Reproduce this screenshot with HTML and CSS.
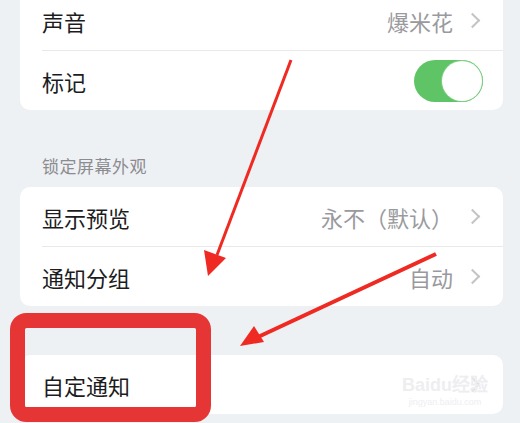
FILE: index.html
```html
<!DOCTYPE html>
<html lang="zh-CN">

<head>
    <meta charset="UTF-8">
    <meta name="viewport" content="width=device-width, initial-scale=1.0">
    <title>通知设置</title>
    <link rel="stylesheet" href="styles.css">
</head>

<body>
    <main class="settings">
        <!-- Sound / badge -->
        <section class="group group-top">
            <div class="row">
                <span class="label">声音</span>
                <span class="value">爆米花<i class="chevron"></i></span>
            </div>
            <div class="row">
                <span class="label">标记</span>
                <span class="toggle on"><span class="knob"></span></span>
            </div>
        </section>

        <!-- Lock screen -->
        <h3 class="group-title">锁定屏幕外观</h3>
        <section class="group">
            <div class="row">
                <span class="label">显示预览</span>
                <span class="value">永不（默认）<i class="chevron"></i></span>
            </div>
            <div class="row">
                <span class="label">通知分组</span>
                <span class="value">自动<i class="chevron"></i></span>
            </div>
        </section>

        <section class="group group-last">
            <div class="row">
                <span class="label">自定通知</span>
                <span class="value"><i class="chevron faint"></i></span>
            </div>
        </section>
    </main>

    <!-- Annotations -->
    <svg class="annotations" width="520" height="423" viewBox="0 0 520 423">
        <rect x="17.5" y="320.5" width="186" height="94" rx="9" fill="none" stroke="#e63535" stroke-width="15" />
        <line x1="291" y1="60" x2="217" y2="255" stroke="#ef2a22" stroke-width="3" />
        <polygon points="208,276 204,250 226,258" fill="#ef2a22" />
        <line x1="436" y1="254" x2="258" y2="337" stroke="#ef2a22" stroke-width="4" />
        <polygon points="240,346 254,326 264,342" fill="#ef2a22" />
    </svg>

    <div class="watermark">
        <div class="wm-brand">Bai<span class="wm-paw">du</span>经验</div>
        <div class="wm-url">jingyan.baidu.com</div>
    </div>
</body>

</html>
```

FILE: styles.css
```css
/* Base */
body {
    margin: 0;
    background-color: #eef1f4;
    font-family: "Noto Sans CJK SC", "Noto Sans", sans-serif;
    color: #1c1c1e;
    overflow: hidden;
}

.settings {
    padding: 0 17px 0 20px;
}

/* Groups */
.group {
    background-color: #ffffff;
    border-radius: 10px;
}

.group-top {
    margin-top: -9px;
    border-top-left-radius: 0;
    border-top-right-radius: 0;
}

.group-last {
    margin-top: 49px;
}

.group-title {
    margin: 0;
    padding: 44px 0 9px 22px;
    font-size: 17px;
    font-weight: 400;
    line-height: 24px;
    letter-spacing: 0.5px;
    color: #8c8c90;
}

/* Rows */
.row {
    display: flex;
    align-items: center;
    justify-content: space-between;
    height: 59px;
    margin-left: 22px;
    padding-right: 21px;
    box-sizing: border-box;
}

.row+.row {
    border-top: 1.5px solid #e9e9ec;
    height: 60px;
}

.label {
    font-size: 22px;
    line-height: 30px;
}

.value {
    display: flex;
    align-items: center;
    gap: 14px;
    font-size: 22px;
    line-height: 30px;
    color: #9a9a9e;
}

.chevron {
    display: inline-block;
    width: 9px;
    height: 9px;
    margin-right: 4px;
    border-top: 2px solid #c4c4c7;
    border-right: 2px solid #c4c4c7;
    transform: rotate(45deg);
}

.chevron.faint {
    border-color: #dcdcde;
}

/* Toggle */
.toggle {
    position: relative;
    display: inline-block;
    width: 69px;
    height: 42px;
    margin-right: -1px;
    border-radius: 21px;
    background-color: #5fc466;
}

.toggle .knob {
    position: absolute;
    top: 1px;
    right: 1px;
    width: 40px;
    height: 40px;
    border-radius: 50%;
    background-color: #ffffff;
    box-shadow: 0 0 0 1px #7fcf84;
}

/* Annotation overlay */
.annotations {
    position: absolute;
    top: 0;
    left: 0;
    pointer-events: none;
}

.watermark {
    position: absolute;
    left: 398px;
    top: 375px;
    width: 94px;
    color: #eeeef0;
    font-family: "Liberation Sans", sans-serif;
    text-align: center;
}

.wm-brand {
    font-size: 18px;
    font-weight: bold;
    line-height: 20px;
}

.wm-url {
    font-size: 9px;
    line-height: 14px;
}
```
